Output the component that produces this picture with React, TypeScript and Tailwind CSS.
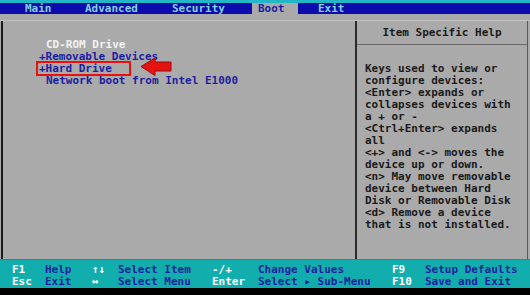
import React from "react";

const mono = { fontFamily: '"DejaVu Sans Mono", "Liberation Mono", monospace' };

export default function App() {
  const help = [
    "Keys used to view or",
    "configure devices:",
    "<Enter> expands or",
    "collapses devices with",
    "a + or -",
    "<Ctrl+Enter> expands",
    "all",
    "<+> and <-> moves the",
    "device up or down.",
    "<n> May move removable",
    "device between Hard",
    "Disk or Removable Disk",
    "<d> Remove a device",
    "that is not installed.",
  ];
  return (
    <div
      className="w-[530px] h-[295px] bg-[#aaaaaa] flex flex-col overflow-hidden font-bold text-[11px]"
      style={mono}
    >
      <div className="h-[3px] bg-[#22b6c6] shrink-0" />
      <div className="h-[11px] bg-[#0c0cac] flex items-stretch leading-[11px] text-[#86cfe0] shrink-0">
        <div className="w-[25px]" />
        <div className="w-[60px]">Main</div>
        <div className="w-[87px]">Advanced</div>
        <div className="w-[80px]">Security</div>
        <div className="w-[46px] bg-[#aaaaaa] text-[#1e1ea0] pl-[6px]">Boot</div>
        <div className="w-[20px]" />
        <div>Exit</div>
      </div>
      <div className="h-[6px] shrink-0" />
      <div className="relative h-[240px] flex border-t border-[#c4c4c4] border-b border-b-[#6e6e6e] shrink-0">
        <div className="w-[354px] border-l-2 border-[#1a1a1a] pt-[18px] leading-[12px] ml-[1px]">
          <div className="pl-[43px] text-[#f2f2f2]">CD-ROM Drive</div>
          <div className="pl-[36px] text-[#1e1ea0]">+Removable Devices</div>
          <div className="pl-[36px] text-[#1e1ea0]">+Hard Drive</div>
          <div className="pl-[43px] text-[#1e1ea0]">Network boot from Intel E1000</div>
        </div>
        <div className="w-[173px] border-l-2 border-[#2a2a2a] border-r border-r-[#5a5a5a] flex flex-col text-[#1a1a1a]">
          <div className="h-[24px] border-b border-[#6a6a6a] flex items-center justify-center leading-[12px] pt-[1px]">
            Item Specific Help
          </div>
          <div className="pl-[8px] pt-[18px] leading-[12px] whitespace-pre">
            {help.map((l, i) => (
              <div key={i}>{l}</div>
            ))}
          </div>
        </div>
        <div className="absolute left-[36px] top-[40px] w-[95px] h-[15px] border-2 border-[#e81010]" />
        <svg className="absolute left-[140px] top-[36px]" width="33" height="20" viewBox="0 0 33 20">
          <polygon
            points="1,9.5 15,1 15,5 31,5 31,14 15,14 15,18.5"
            fill="#e51212"
            stroke="#a00808"
            strokeWidth="1"
          />
        </svg>
      </div>
      <div className="h-[28px] bg-[#12aeae] pt-[4px] leading-[12px] shrink-0">
        {[
          ["F1", "Help", "\u2191\u2193", "Select Item", "-/+", "Change Values", "F9", "Setup Defaults"],
          ["Esc", "Exit", "\u2194", "Select Menu", "Enter", "Select \u25B8 Sub-Menu", "F10", "Save and Exit"],
        ].map((r, i) => (
          <div key={i} className="flex pl-[12px]">
            <div className="w-[33px] text-white">{r[0]}</div>
            <div className="w-[47px] text-[#1e1ea0]">{r[1]}</div>
            <div className="w-[26px] text-white">{r[2]}</div>
            <div className="w-[94px] text-[#1e1ea0]">{r[3]}</div>
            <div className="w-[46px] text-white">{r[4]}</div>
            <div className="w-[134px] text-[#1e1ea0] whitespace-pre">{r[5]}</div>
            <div className="w-[33px] text-white">{r[6]}</div>
            <div className="text-[#1e1ea0]">{r[7]}</div>
          </div>
        ))}
      </div>
      <div className="flex-1 bg-black" />
    </div>
  );
}
